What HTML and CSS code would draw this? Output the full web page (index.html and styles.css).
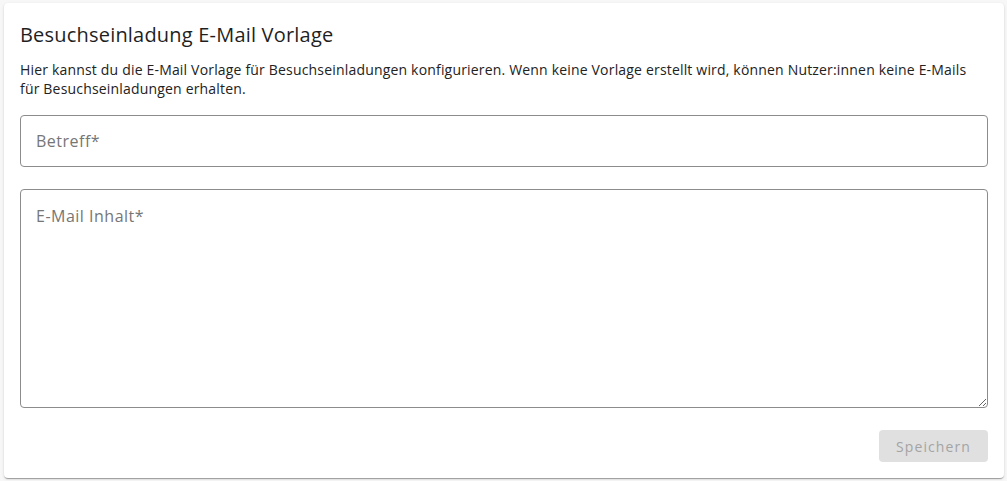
FILE: index.html
```html
<!DOCTYPE html>
<html lang="de">
<head>
<meta charset="utf-8">
<link rel="stylesheet" href="styles.css">
</head>
<body>
<div class="card">
  <h2 class="title">Besuchseinladung E-Mail Vorlage</h2>
  <p class="desc">Hier kannst du die E-Mail Vorlage für Besuchseinladungen konfigurieren. Wenn keine Vorlage erstellt wird, können Nutzer:innen keine E-Mails für Besuchseinladungen erhalten.</p>
  <input class="field" type="text" placeholder="Betreff*">
  <textarea class="field area" placeholder="E-Mail Inhalt*"></textarea>
  <div class="actions">
    <button class="btn" disabled>Speichern</button>
  </div>
</div>
</body>
</html>
```
FILE: styles.css
```css
html, body {
  margin: 0;
  height: 100%;
}
body {
  background: #f7f7f7;
  padding: 3px 3px 3px 4px;
  box-sizing: border-box;
  font-family: "Open Sans", "Noto Sans", sans-serif;
  color: #1e1e1e;
}
.card {
  background: #fff;
  border-radius: 4px;
  box-shadow: 0 2px 1px -1px rgba(0,0,0,0.2), 0 1px 1px 0 rgba(0,0,0,0.14), 0 1px 3px 0 rgba(0,0,0,0.12);
  padding: 16px;
  height: 475px;
  box-sizing: border-box;
  display: flex;
  flex-direction: column;
}
.title {
  margin: 0;
  font-size: 20px;
  font-weight: 400;
  line-height: 32px;
  letter-spacing: 0.2px;
  color: #1f1f1f;
}
.desc {
  margin: 10px 0 0;
  font-size: 14px;
  line-height: 18.5px;
  letter-spacing: 0.18px;
  color: #222;
}
.field {
  display: block;
  box-sizing: border-box;
  width: 100%;
  margin: 17px 0 0;
  border: 1px solid #8c8c8c;
  border-radius: 4px;
  font-family: inherit;
  font-size: 16px;
  letter-spacing: 0.5px;
  padding: 0 15px;
  height: 52px;
  color: #222;
  outline: none;
  background: #fff;
}
.field::placeholder {
  color: #767676;
  opacity: 1;
}
.area {
  margin-top: 22px;
  height: 220px;
  padding: 14px 15px;
  line-height: 24px;
  resize: vertical;
}
.actions {
  display: flex;
  justify-content: flex-end;
  margin-top: 22px;
}
.btn {
  font-family: inherit;
  font-size: 14px;
  letter-spacing: 1.1px;
  background: #e0e0e0;
  color: #a4a4a4;
  border: none;
  border-radius: 4px;
  width: 109px;
  height: 32px;
  padding: 0;
}
```
